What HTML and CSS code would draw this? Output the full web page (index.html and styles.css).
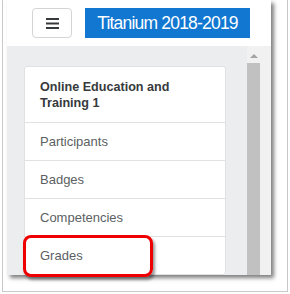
FILE: index.html
```html
<!DOCTYPE html>
<html lang="en">
  <head>
    <meta charset="UTF-8" />
    <meta name="viewport" content="width=device-width, initial-scale=1.0" />
    <title>Course menu</title>
    <link rel="stylesheet" href="styles.css">
  </head>
  <body>
    <div class="frame">
      <div class="shot">
        <!-- top bar -->
        <header class="navbar">
          <button class="menu-btn" type="button" aria-label="Menu">
            <svg width="14" height="11" viewBox="0 0 14 11">
              <rect x="0" y="0" width="13" height="2" fill="#373a3c" />
              <rect x="0" y="4.5" width="13" height="2" fill="#373a3c" />
              <rect x="0" y="9" width="13" height="2" fill="#373a3c" />
            </svg>
          </button>
          <div class="brand">Titanium 2018-2019</div>
        </header>

        <!-- drawer -->
        <div class="drawer">
          <div class="drawer-body">
            <nav class="list">
              <div class="list-item list-title">Online Education and Training 1</div>
              <div class="list-item">Participants</div>
              <div class="list-item">Badges</div>
              <div class="list-item">Competencies</div>
              <div class="list-item">Grades</div>
            </nav>
          </div>
          <div class="scrollbar">
            <span class="scroll-arrow"></span>
            <span class="scroll-thumb"></span>
          </div>
        </div>
      </div>

      <!-- highlight -->
      <div class="callout"></div>
    </div>
  </body>
</html>
```

FILE: styles.css
```css
body {
  margin: 0;
  background-color: white;
  font-family: "Liberation Sans", Arial, sans-serif;
}
.frame {
  position: relative;
  box-sizing: border-box;
  width: 286px;
  height: 292px;
  margin-left: 2px;
  border: 1px solid #c9c9c9;
  border-top: none;
  overflow: hidden;
}
.shot {
  width: 264px;
  height: 275px;
  margin-left: 4px;
  background-color: white;
  overflow: hidden;
  box-shadow: 3px 3px 4px rgba(0, 0, 0, 0.5);
}
.navbar {
  display: flex;
  gap: 13px;
  height: 46px;
  box-sizing: border-box;
  padding: 8px 0 0 25px;
}
.menu-btn {
  width: 40px;
  height: 30px;
  padding: 0;
  border: 1px solid #d4d4d4;
  border-radius: 4px;
  background-color: white;
  display: flex;
  justify-content: center;
  align-items: center;
}
.menu-btn svg {
  display: block;
  margin-left: 1px;
}
.brand {
  width: 165px;
  height: 30px;
  background-color: #1177d1;
  color: white;
  font-size: 17.5px;
  letter-spacing: -0.8px;
  line-height: 30px;
  text-align: center;
}
.drawer {
  display: flex;
  height: 229px;
  background-color: #ebedef;
}
.drawer-body {
  flex: 1;
  padding: 20px 0 0 17px;
}
.list {
  width: 202px;
  background-color: white;
  border: 1px solid #dfe1e3;
  border-radius: 3px;
  box-sizing: border-box;
}
.list-item {
  height: 38px;
  box-sizing: border-box;
  padding: 0 15px;
  border-top: 1px solid #dfe1e3;
  display: flex;
  align-items: center;
  font-size: 13px;
  color: #5b5f63;
}
.list-title {
  height: 55px;
  border-top: none;
  font-size: 12.6px;
  font-weight: bold;
  line-height: 16px;
  color: #373a3c;
  padding-right: 40px;
}
.scrollbar {
  width: 24px;
  background-color: #f1f1f1;
  display: flex;
  flex-direction: column;
}
.scroll-arrow {
  width: 0;
  height: 0;
  margin: 8px 0 0 3px;
  border-left: 4px solid transparent;
  border-right: 4px solid transparent;
  border-bottom: 4px solid #a3a3a3;
}
.scroll-thumb {
  flex: 1;
  width: 13px;
  margin-top: 5px;
  background-color: #c1c1c1;
}
.callout {
  position: absolute;
  left: 20px;
  top: 235px;
  width: 130px;
  height: 42px;
  box-sizing: border-box;
  border: 3px solid #ee0000;
  border-radius: 8px;
  box-shadow: 2px 3px 3px rgba(0, 0, 0, 0.4);
}
```
